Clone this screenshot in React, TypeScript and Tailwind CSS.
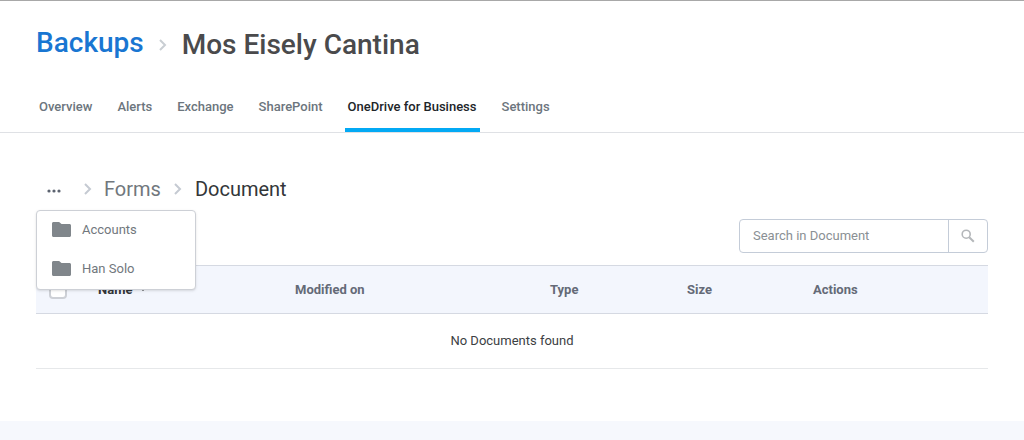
import React, { useState } from 'react';

const tabs = ['Overview', 'Alerts', 'Exchange', 'SharePoint', 'OneDrive for Business', 'Settings'];

const parentFolders = ['Accounts', 'Han Solo'];

const ChevronIcon = ({ className }: { className: string }) => (
  <svg viewBox="0 0 8 12" className={className} fill="none" stroke="currentColor" strokeWidth="2" aria-hidden="true">
    <path d="M1 1l5 5-5 5" />
  </svg>
);

const FolderIcon = () => (
  <svg viewBox="2 4 20 16" preserveAspectRatio="none" className="mb-0.5 h-[15px] w-[19px] text-[#80868b]" fill="currentColor" aria-hidden="true">
    <path d="M9.500 4H3.600C2.700 4 2 4.700 2 5.600v12.800c0 .9.7 1.600 1.600 1.600h16.800c.9 0 1.600-.7 1.600-1.600V7.600c0-.9-.7-1.600-1.600-1.600H12z" />
  </svg>
);

const SearchIcon = () => (
  <svg viewBox="0 0 14 14" className="h-3.5 w-3.5" fill="none" stroke="currentColor" aria-hidden="true">
    <circle cx="5.200" cy="5.200" r="4" strokeWidth="1.600" />
    <path d="M8.200 8.200l4.600 4.600" strokeWidth="2" />
  </svg>
);

const Header = () => {
  const [active, setActive] = useState('OneDrive for Business');

  return (
    <header className="border-t border-b border-t-[#a8a8a8] border-b-[#dfe1e5]">
      <h1 className="flex items-center px-9 pt-6 text-[28px] leading-9 font-medium text-[#4a4a4c]">
        <a href="#backups" className="pb-1 text-[#1976d2]">Backups</a>
        <ChevronIcon className="mx-[15px] h-3 w-2 text-[#c9ced3]" />
        <span>Mos Eisely Cantina</span>
      </h1>
      <nav className="flex gap-[19px] px-9 pt-6">
        {tabs.map(tab => (
          <button
            key={tab}
            type="button"
            onClick={() => setActive(tab)}
            className={`border-b-4 px-[3px] pt-2 pb-[11px] text-[13px] leading-5 font-medium ${
              tab === active ? 'border-[#03a9f4] text-[#212529]' : 'border-transparent text-[#6c757d]'
            }`}
          >
            {tab}
          </button>
        ))}
      </nav>
    </header>
  );
};

const FolderPath = () => {
  const [open, setOpen] = useState(true);

  return (
    <nav className="relative flex h-8 items-center text-xl text-[#71777d]">
      <button
        type="button"
        aria-label="Show parent folders"
        aria-expanded={open}
        onClick={() => setOpen(!open)}
        className="flex w-9 justify-center pt-1"
      >
        <svg viewBox="0 0 14 4" className="h-1 w-3.5 text-[#5c6370]" fill="currentColor" aria-hidden="true">
          <circle cx="2" cy="2" r="1.600" />
          <circle cx="7" cy="2" r="1.600" />
          <circle cx="12" cy="2" r="1.600" />
        </svg>
      </button>
      <ChevronIcon className="mx-3 h-3 w-2 text-[#c5cad2]" />
      <a href="#forms">Forms</a>
      <ChevronIcon className="mx-[13px] h-3 w-2 text-[#c5cad2]" />
      <span className="text-[#333639]">Document</span>

      {open && (
        <ul className="absolute top-full left-0 z-10 mt-[5px] w-40 rounded-sm border border-[#cdd0d6] bg-white shadow-sm">
          {parentFolders.map(folder => (
            <li key={folder}>
              <a href="#folder" className="flex h-[39px] items-center gap-[11px] px-[15px] text-[13px]">
                <FolderIcon />
                {folder}
              </a>
            </li>
          ))}
        </ul>
      )}
    </nav>
  );
};

const DocumentTable = () => (
  <table className="w-full table-fixed text-left text-[13px]">
    <thead>
      <tr className="h-12 border-y border-[#d5d9e2] bg-[#f3f6fd] text-[#646a77]">
        <th className="w-[62px] pl-[13px]">
          <input
            type="checkbox"
            aria-label="Select all documents"
            className="block h-[18px] w-[18px] appearance-none rounded-sm border-2 border-[#cdd0d6] bg-white"
          />
        </th>
        <th className="w-[197px] font-bold text-[#333639]">
          <span className="flex items-center gap-2">
            Name
            <svg viewBox="0 0 6 3" className="h-[3px] w-1.5" fill="currentColor" aria-hidden="true">
              <path d="M0 0h6l-3 3z" />
            </svg>
          </span>
        </th>
        <th className="w-[255px] font-bold">Modified on</th>
        <th className="w-[137px] font-bold">Type</th>
        <th className="w-[126px] font-bold">Size</th>
        <th className="font-bold">Actions</th>
      </tr>
    </thead>
    <tbody>
      <tr className="h-[55px] border-b border-[#e6e8ea]">
        <td colSpan={6} className="text-center text-[#3c4043]">No Documents found</td>
      </tr>
    </tbody>
  </table>
);

export default function App() {
  return (
    <div className="min-h-screen bg-[#f6f8fd] font-['Roboto',sans-serif]">
      <div className="bg-white pb-[52px]">
        <Header />
        <main className="px-9 pt-10">
          <FolderPath />
          <form className="mt-3.5 mb-3 flex justify-end" onSubmit={e => e.preventDefault()}>
            <div className="flex h-[34px] w-[249px] rounded-sm border border-[#c4ccd8] text-[13px]">
              <input
                type="text"
                aria-label="Search in Document"
                placeholder="Search in Document"
                className="min-w-0 flex-1 px-[13px] text-[#3c4043] outline-none placeholder:text-[#8a9094]"
              />
              <button
                type="submit"
                aria-label="Search"
                className="flex w-[39px] items-center justify-center border-l border-[#c4ccd8] text-[#b4b7ba]"
              >
                <SearchIcon />
              </button>
            </div>
          </form>
          <DocumentTable />
        </main>
      </div>
    </div>
  );
}
